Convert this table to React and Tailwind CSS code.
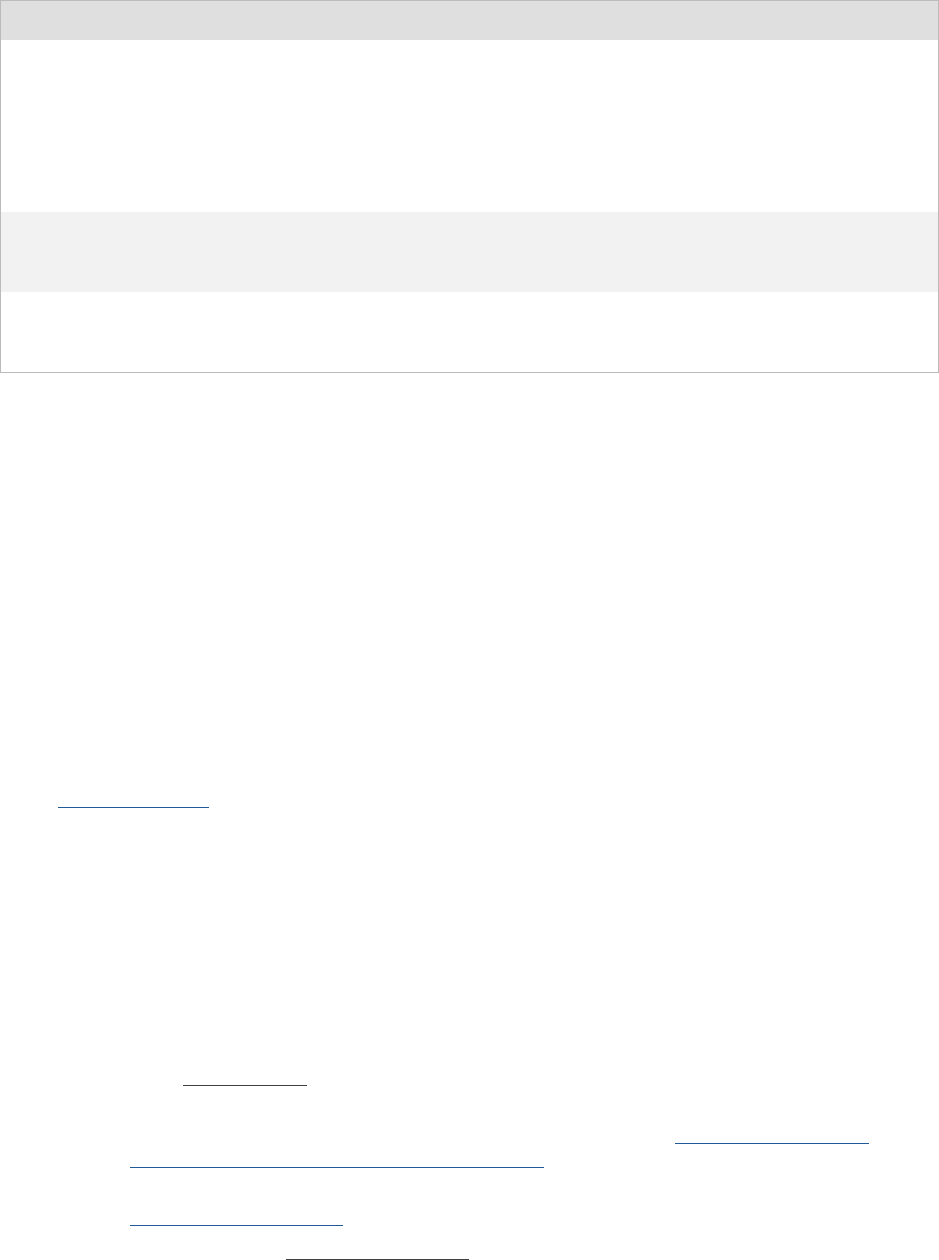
export default function App() {
  // text in the source renders invisible; only table fills and link underlines remain
  const lines = [
    { mt: 'mt-[434px]', ml: 'ml-[58px]', w: 'w-[151px]', c: 'bg-[#215a97]' },
    { mt: 'mt-[277px]', ml: 'ml-[183px]', w: 'w-[124px]', c: 'bg-[#404040]' },
    { mt: 'mt-[57px]', ml: 'ml-[675px]', w: 'w-[194px]', c: 'bg-[#215a97]' },
    { mt: 'mt-[23px]', ml: 'ml-[130px]', w: 'w-[414px]', c: 'bg-[#215a97]' },
    { mt: 'mt-[57px]', ml: 'ml-[130px]', w: 'w-[213px]', c: 'bg-[#215a97]' },
    { mt: 'mt-[33px]', ml: 'ml-[286px]', w: 'w-[183px]', c: 'bg-[#404040]' },
  ]

  return (
    <div className="w-[939px] min-h-[1260px] bg-white">
      <div className="w-full border border-[#bbbbbb] flex flex-col">
        <div className="h-[39px] bg-[#dfdfdf]" />
        <div className="h-[172px] bg-white" />
        <div className="h-[80px] bg-[#f2f2f2]" />
        <div className="h-[80px] bg-white" />
      </div>

      {lines.map((l, i) => (
        <div key={i} className={`${l.mt} ${l.ml} ${l.w} ${l.c} h-px`} />
      ))}
    </div>
  )
}
